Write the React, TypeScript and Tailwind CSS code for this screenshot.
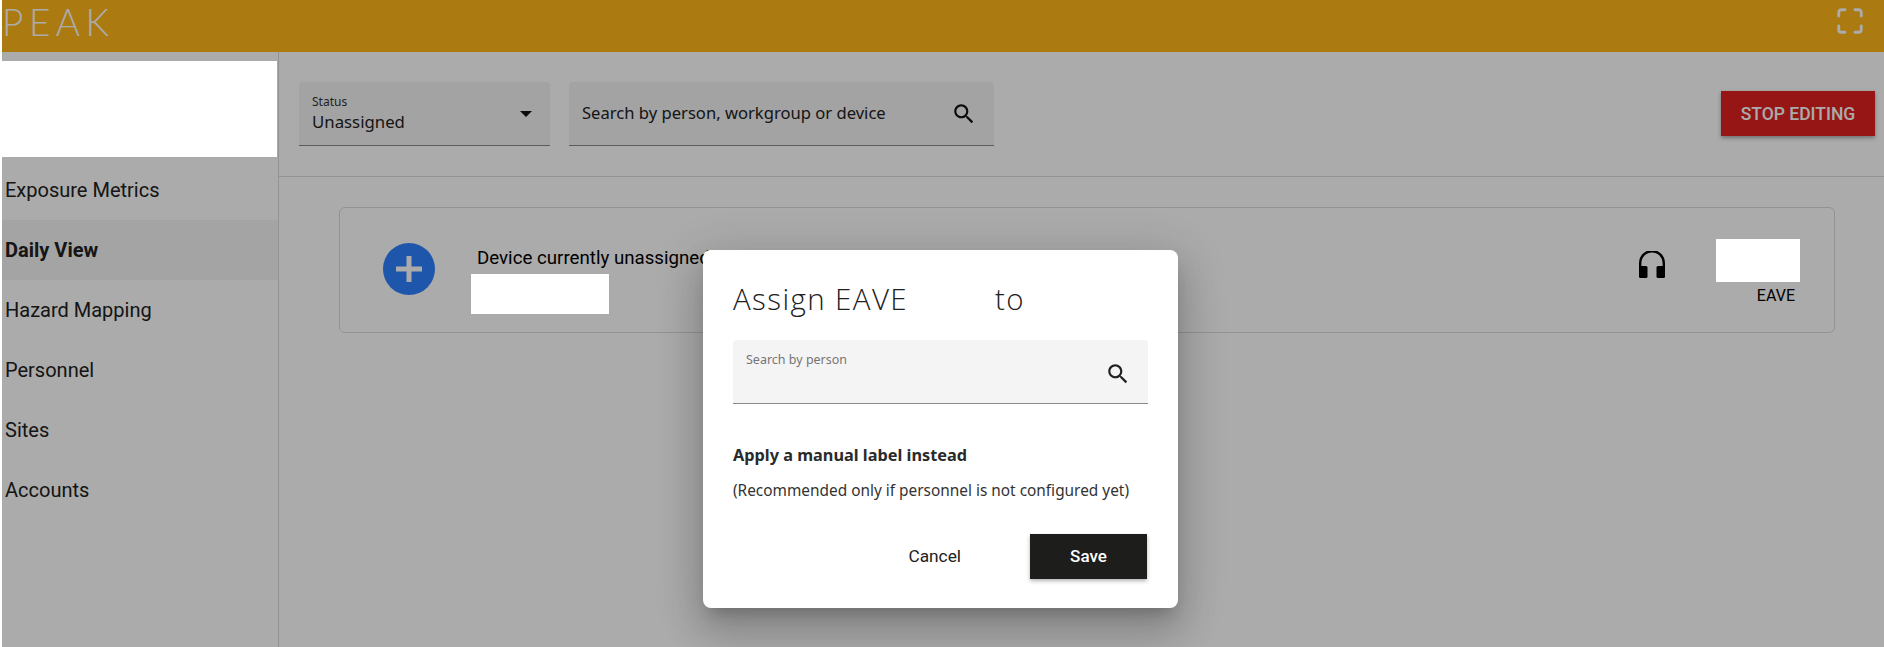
import { Maximize } from "lucide-react";

const navItems = ["Exposure Metrics", "Daily View", "Hazard Mapping", "Personnel", "Sites", "Accounts"];

const SearchIcon = ({ className }: { className: string }) => (
  <svg viewBox="0 0 24 24" fill="currentColor" className={className}>
    <path d="M15.5 14h-.79l-.28-.27C15.41 12.59 16 11.11 16 9.5 16 5.91 13.09 3 9.5 3S3 5.91 3 9.5 5.91 16 9.5 16c1.61 0 3.09-.59 4.23-1.57l.27.28v.79l5 4.99L20.49 19l-4.99-5zm-6 0C7.01 14 5 11.99 5 9.5S7.01 5 9.5 5 14 7.01 14 9.5 11.99 14 9.5 14z" />
  </svg>
);

const App = () => {
  return (
    <div className="relative h-[647px] w-full overflow-hidden bg-white pl-[2px] font-['Roboto',sans-serif]">
      {/* top bar */}
      <header className="flex h-[52px] items-start justify-between bg-[#ffb718] pr-[19px]">
        <span className="font-['Lato',sans-serif] text-[37px] leading-[44px] font-light tracking-[5.5px] text-white">
          PEAK
        </span>
        <Maximize size={30} strokeWidth={2.3} className="mt-[6px] text-white" />
      </header>

      <div className="flex h-[595px]">
        {/* sidebar */}
        <aside className="w-[277px] shrink-0 border-r border-[#dcdcdc] pt-[9px]">
          <div className="relative z-20 h-[96px] w-[275px] bg-white" />
          <nav className="pt-[3px]">
            {navItems.map((item) => (
              <div
                key={item}
                className={`flex h-[60px] items-center pl-[3px] text-[20px] text-[#212121] ${
                  item === "Daily View" ? "bg-[#f5f5f5] font-bold" : ""
                }`}
              >
                {item}
              </div>
            ))}
          </nav>
        </aside>

        <main className="min-w-0 flex-1">
          {/* filters */}
          <div className="flex h-[125px] items-start border-b border-[#dcdcdc] pr-[9px] pl-[20px]">
            <div className="mt-[30px] flex h-[64px] w-[251px] items-center justify-between rounded-t border-b border-[#8a8a8a] bg-[#f3f3f3] pr-[18px] pl-[13px] font-['Noto_Sans',sans-serif]">
              <div>
                <div className="text-[12px] leading-[16px] text-[#333]">Status</div>
                <div className="text-[16.8px] leading-[24px] text-[#222]">Unassigned</div>
              </div>
              <svg viewBox="0 0 12 6" className="h-[6px] w-[12px]" fill="#111">
                <path d="M0 0h12L6 6z" />
              </svg>
            </div>
            <div className="mt-[30px] ml-[19px] flex h-[64px] w-[425px] items-center justify-between rounded-t border-b border-[#8a8a8a] bg-[#f3f3f3] pr-[17px] pl-[13px]">
              <span className="font-['Noto_Sans',sans-serif] text-[16.6px] text-[#222]">Search by person, workgroup or device</span>
              <SearchIcon className="h-[26px] w-[26px] text-[#111]" />
            </div>
            <button className="mt-[39px] ml-auto h-[45px] w-[154px] bg-[#e02020] pt-[1px] text-[17.5px] font-medium text-white shadow-[0_2px_4px_rgba(0,0,0,0.35)]">
              STOP EDITING
            </button>
          </div>

          {/* device card */}
          <div className="pt-[30px] pr-[49px] pl-[60px]">
            <div className="flex h-[126px] items-start rounded-md border border-[#dcdcdc] pl-[43px]">
              <svg viewBox="0 0 52 52" className="mt-[35px] h-[52px] w-[52px] shrink-0">
                <circle cx="26" cy="26" r="26" fill="#2d80ff" />
                <rect x="13" y="23.5" width="26" height="5" fill="#fff" />
                <rect x="23.5" y="13" width="5" height="26" fill="#fff" />
              </svg>
              <div className="ml-[36px] pt-[40px]">
                <div className="pl-[6px] text-[18.7px] leading-[20px] whitespace-nowrap text-black">Device currently unassigned</div>
                <div className="relative z-20 mt-[6px] h-[40px] w-[138px] bg-white" />
              </div>
              <svg viewBox="0 0 26 27" className="mt-[43px] ml-auto h-[27px] w-[26px] text-black" fill="currentColor">
                <path d="M1.2 17v-5a11.8 11.8 0 0 1 23.6 0v5" fill="none" stroke="currentColor" strokeWidth="2.4" />
                <rect x="0" y="15" width="8.5" height="12" rx="1.5" />
                <rect x="17.5" y="15" width="8.5" height="12" rx="1.5" />
              </svg>
              <div className="mr-[34px] ml-[51px] flex w-[84px] flex-col items-end pt-[31px]">
                <div className="relative z-20 h-[43px] w-[84px] bg-white" />
                <div className="pt-[5px] pr-[5px] text-[16px] leading-[18px] text-black">EAVE</div>
              </div>
            </div>
          </div>
        </main>
      </div>

      {/* backdrop */}
      <div className="absolute inset-y-0 right-0 left-[2px] z-10 bg-black/33" />

      {/* assign dialog */}
      <div className="absolute top-[250px] left-[703px] z-30 h-[358px] w-[475px] rounded-lg bg-white px-[30px] pt-[30px] font-['Noto_Sans',sans-serif] text-[#212121] shadow-[0_11px_15px_-7px_rgba(0,0,0,0.2),0_24px_38px_3px_rgba(0,0,0,0.14),0_9px_46px_8px_rgba(0,0,0,0.12)]">
        <h2 className="flex h-[38px] items-center font-['Open_Sans',sans-serif] text-[29.5px] font-light tracking-[1.4px]">
          <span>Assign EAVE</span>
          <span className="ml-[87px]">to</span>
        </h2>
        <div className="mt-[22px] flex h-[64px] w-[415px] justify-between rounded-t border-b border-[#8a8a8a] bg-[#f4f4f4] pr-[17px] pl-[13px]">
          <span className="pt-[11px] text-[12.5px] leading-[18px] text-[#757575]">Search by person</span>
          <SearchIcon className="mt-[21px] h-[26px] w-[26px] text-[#212121]" />
        </div>
        <div className="mt-[40px] text-[16.3px] leading-[22px] font-bold text-[#2a2a2a]">Apply a manual label instead</div>
        <div className="mt-[15px] text-[15.4px] leading-[20px] text-[#333]">(Recommended only if personnel is not configured yet)</div>
        <div className="mt-[33px] flex items-center justify-end pr-[1px] font-['Roboto',sans-serif] text-[17px] font-medium">
          <button className="mr-[69px] text-[17.3px] font-normal text-[#212121]">Cancel</button>
          <button className="h-[45px] w-[117px] bg-[#1d1d1b] text-white shadow-[0_2px_4px_rgba(0,0,0,0.3)]">Save</button>
        </div>
      </div>
    </div>
  );
};

export default App;
